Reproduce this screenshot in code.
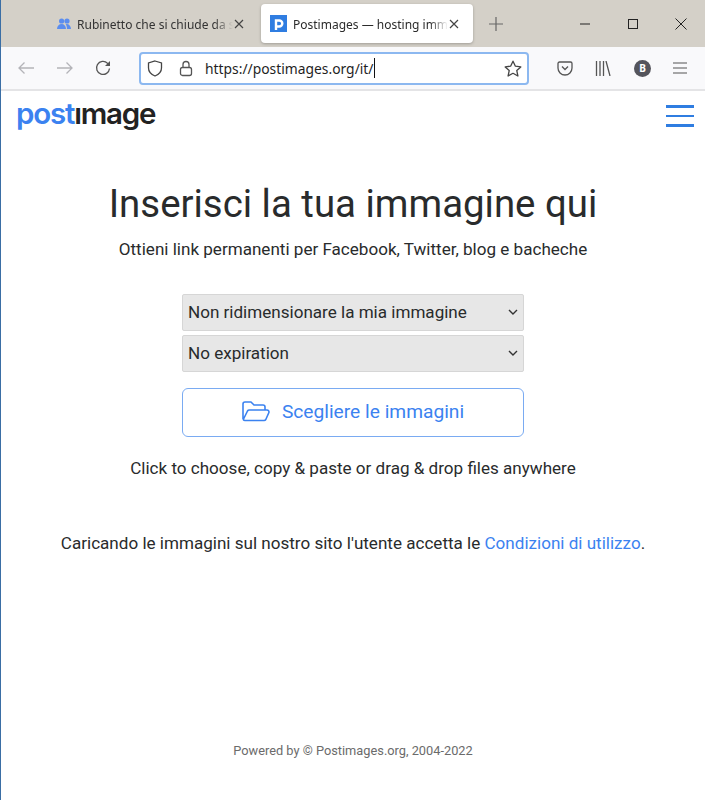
<script>
  const options1 = ['Non ridimensionare la mia immagine'];
  const options2 = ['No expiration'];
</script>

<div class="window">
  <div class="tabbar">
    <div class="tab inactive">
      <svg class="fav" width="14" height="14" viewBox="0 0 14 14"><circle cx="4.6" cy="4" r="2.6" fill="#5b8def"/><circle cx="10" cy="4" r="2.6" fill="#5b8def"/><path d="M0 12c0-3 2-5 4.6-5S9 9 9 12z" fill="#5b8def"/><path d="M9.6 7c2.4 0 4.4 2 4.4 5h-4c0-2-.4-3.500-1.400-4.500z" fill="#5b8def"/></svg>
      <span class="tabtext">Rubinetto che si chiude da solo</span>
      <svg class="x" width="12" height="12" viewBox="0 0 12 12"><path d="M2 2l8 8M10 2l-8 8" stroke="#444" stroke-width="1.200" fill="none"/></svg>
    </div>
    <div class="tab active">
      <svg class="fav2" width="17" height="17" viewBox="0 0 17 17"><rect width="17" height="17" fill="#2f7de1"/><path d="M6 15V5.500h3.300a3 3 0 0 1 0 6H6" stroke="#fff" stroke-width="2.400" fill="none"/></svg>
      <span class="tabtext">Postimages — hosting immagini</span>
      <svg class="x" width="12" height="12" viewBox="0 0 12 12"><path d="M2 2l8 8M10 2l-8 8" stroke="#444" stroke-width="1.200" fill="none"/></svg>
    </div>
    <svg class="plus" width="14" height="14" viewBox="0 0 14 14"><path d="M7 0v14M0 7h14" stroke="#666" stroke-width="1.200"/></svg>
    <div class="winbtns">
      <svg width="12" height="12" viewBox="0 0 12 12"><path d="M1 6h10" stroke="#222" stroke-width="1"/></svg>
      <svg width="12" height="12" viewBox="0 0 12 12"><rect x="1.500" y="1.500" width="9" height="9" fill="none" stroke="#222" stroke-width="1"/></svg>
      <svg width="12" height="12" viewBox="0 0 12 12"><path d="M.5 .5l11 11M11.500 .5l-11 11" stroke="#222" stroke-width="1"/></svg>
    </div>
  </div>

  <div class="toolbar">
    <svg class="nav first" width="18" height="14" viewBox="0 0 18 14"><path d="M17 7H2M7.500 1.500 2 7l5.500 5.500" stroke="#b4b4b8" stroke-width="1.300" fill="none"/></svg>
    <svg class="nav second" width="18" height="14" viewBox="0 0 18 14"><path d="M1 7h15M10.500 1.500 16 7l-5.500 5.500" stroke="#b4b4b8" stroke-width="1.300" fill="none"/></svg>
    <svg class="nav third" width="16" height="16" viewBox="0 0 16 16"><path d="M14.500 8.500A6.500 6.500 0 1 1 12.500 3.200L14.500 5" stroke="#555" stroke-width="1.300" fill="none"/><path d="M15 1v5h-5z" fill="#555"/></svg>
    <div class="urlbar">
      <svg class="shield" width="16" height="17" viewBox="0 0 16 17"><path d="M8 1l6.500 2v5c0 4-3 6.500-6.500 8C4.500 14.500 1.500 12 1.500 8V3z" fill="none" stroke="#444" stroke-width="1.300"/></svg>
      <svg class="lock" width="14" height="17" viewBox="0 0 14 17"><rect x="1.500" y="7.500" width="11" height="8" rx="2" fill="none" stroke="#555" stroke-width="1.300"/><path d="M4 7.500V4.500a3 3 0 0 1 6 0v3" fill="none" stroke="#555" stroke-width="1.300"/></svg>
      <span class="url">https://postimages.org/it/</span><span class="caret"></span>
      <svg class="star" width="18" height="17" viewBox="0 0 18 17"><path d="M9 1.200l2.400 5 5.400.7-4 3.700 1.100 5.400L9 13.300 4.100 16l1.100-5.400-4-3.700 5.400-.7z" fill="none" stroke="#444" stroke-width="1.300" stroke-linejoin="round"/></svg>
    </div>
    <svg class="tool pocket" width="16" height="15" viewBox="0 0 16 15"><path d="M2.500 1h11A1.500 1.500 0 0 1 15 2.500V7a7 7 0 0 1-14 0V2.500A1.500 1.500 0 0 1 2.500 1z" fill="none" stroke="#555" stroke-width="1.300"/><path d="M5 5.500l3 3 3-3" fill="none" stroke="#555" stroke-width="1.300"/></svg>
    <svg class="tool library" width="16" height="15" viewBox="0 0 16 15"><path d="M1.500 0v15M5 0v15M8.500 0v15M11 0l4 15" stroke="#555" stroke-width="1.300" fill="none"/></svg>
    <div class="avatar">B</div>
    <svg class="tool menu" width="14" height="12" viewBox="0 0 14 12"><path d="M0 1h14M0 6h14M0 11h14" stroke="#555" stroke-width="1.200"/></svg>
  </div>

  <div class="page">
    <header class="head">
      <div class="logo"><span class="post">post</span><span class="image">ımage</span></div>
      <div class="burger"><i></i><i></i><i></i></div>
    </header>

    <main class="main">
      <h1>Inserisci la tua immagine qui</h1>
      <p class="sub">Ottieni link permanenti per Facebook, Twitter, blog e bacheche</p>
      <div class="controls">
        <div class="select"><span>{options1[0]}</span><svg width="10" height="6" viewBox="0 0 10 6"><path d="M1 1l4 4 4-4" fill="none" stroke="#333" stroke-width="1.400"/></svg></div>
        <div class="select"><span>{options2[0]}</span><svg width="10" height="6" viewBox="0 0 10 6"><path d="M1 1l4 4 4-4" fill="none" stroke="#333" stroke-width="1.400"/></svg></div>
        <button class="choose">
          <svg width="28" height="21" viewBox="0 0 28 21"><path d="M1 18V3a2 2 0 0 1 2-2h6l3 3h9a2 2 0 0 1 2 2v2.500M1.300 18.500 5.500 10a2 2 0 0 1 1.800-1H25a2 2 0 0 1 1.800 2.800l-3 6.700a2 2 0 0 1-1.800 1H3a2 2 0 0 1-1.700-1z" fill="none" stroke="#3b82f0" stroke-width="1.600" stroke-linejoin="round"/></svg>
          <span>Scegliere le immagini</span>
        </button>
      </div>
      <p class="hint">Click to choose, copy &amp; paste or drag &amp; drop files anywhere</p>
      <p class="terms">Caricando le immagini sul nostro sito l'utente accetta le <a href="#top">Condizioni di utilizzo</a>.</p>
    </main>

    <footer class="foot">Powered by © Postimages.org, 2004-2022</footer>
  </div>
</div>

<style>
  :global(body) { margin: 0; background: #fff; }
  .window {
    width: 705px; height: 800px; box-sizing: border-box;
    border-left: 1px solid #3a6ea5;
    display: flex; flex-direction: column; overflow: hidden;
    font-family: Roboto, "Liberation Sans", sans-serif; color: #292b2c;
  }
  .tabbar {
    height: 47px; flex: none; background: #d4d0c8;
    display: flex; align-items: center; padding-left: 56px; box-sizing: border-box;
    font-family: "Noto Sans", Roboto, sans-serif; font-size: 12px; color: #2b2b2b;
  }
  .tab { height: 39px; display: flex; align-items: center; box-sizing: border-box; }
  .tab.inactive { width: 204px; }
  .tab.active {
    width: 212px; background: #fff; border-radius: 4px; padding-left: 9px;
    box-shadow: 0 1px 3px rgba(0,0,0,.25);
  }
  .fav { flex: none; margin-right: 6px; }
  .fav2 { flex: none; margin-right: 6px; }
  .tabtext {
    font-family: "Noto Sans", sans-serif; white-space: nowrap; overflow: hidden; flex: 1; min-width: 0; padding-top: 2px;
    -webkit-mask-image: linear-gradient(to right, #000 88%, transparent);
    mask-image: linear-gradient(to right, #000 88%, transparent);
  }
  .inactive .tabtext { color: #333; }
  .x { flex: none; }
  .inactive .x { margin-right: 16px; }
  .active .x { margin-right: 13px; }
  .plus { margin-left: 16px; flex: none; }
  .winbtns { margin-left: auto; display: flex; gap: 36px; padding-right: 18px; }
  .toolbar {
    height: 44px; flex: none; background: #f9f9fb; border-bottom: 2px solid #e4e4e6;
    display: flex; align-items: center; box-sizing: border-box; padding-left: 16px;
  }
  .nav, .tool { flex: none; }
  .nav.second { margin-left: 21px; }
  .nav.third { margin-left: 21px; }
  .urlbar {
    margin-left: 28px; width: 390px; height: 33px; box-sizing: border-box; flex: none;
    background: #fff; border: 2px solid #8cb8f0; border-radius: 4px;
    display: flex; align-items: center; padding: 0 5px 0 6px;
  }
  .lock { margin-left: 16px; }
  .url { margin-left: 12px; font-family: "Noto Sans", sans-serif; font-size: 13.850px; color: #1f1f1f; }
  .caret { width: 1px; height: 20px; background: #111; }
  .star { margin-left: auto; }
  .pocket { margin-left: 28px; }
  .library { margin-left: 22px; }
  .avatar {
    margin-left: 23px; width: 17px; height: 17px; border-radius: 50%; background: #54545c; color: #fff;
    font: bold 10px "Noto Sans", sans-serif; display: flex; align-items: center; justify-content: center; flex: none;
  }
  .menu { margin-left: 22px; }
  .page { flex: 1; display: flex; flex-direction: column; min-height: 0; background: #fff; }
  .head { height: 50px; flex: none; display: flex; justify-content: space-between; align-items: center; padding: 0 11px 0 15px; box-sizing: border-box; }
  .logo { font: 600 29.500px/1 Inter, sans-serif; letter-spacing: -1.200px; margin-top: -5px; }
  .post { color: #3b82f0; }
  .image { color: #222; }
  .burger { display: flex; flex-direction: column; gap: 7px; }
  .burger i { display: block; width: 28px; height: 2.500px; background: #2f7de1; }
  .main { display: flex; flex-direction: column; align-items: center; }
  h1 { margin: 40px 0 0; font-size: 38.400px; font-weight: 400; line-height: 46px; white-space: nowrap; }
  .sub { margin: 10px 0 0; font-size: 17.070px; line-height: 24px; }
  .controls { margin-top: 33px; width: 342px; display: flex; flex-direction: column; }
  .select {
    height: 37px; box-sizing: border-box; background: #e7e7e7; border: 1px solid #d6d6d6; border-radius: 2px;
    display: flex; align-items: center; justify-content: space-between; padding: 0 5px 2px; font-size: 17.070px;
  }
  .select + .select { margin-top: 4px; }
  .choose {
    margin-top: 16px; height: 49px; background: #fff; border: 1px solid #7aabf2; border-radius: 6px;
    color: #3b82f0; font: 400 19.200px Roboto, sans-serif;
    display: flex; align-items: center; justify-content: center; gap: 12px; padding: 0 0 3px;
  }
  .hint { margin: 19px 0 0; font-size: 17.070px; line-height: 24px; }
  .terms { margin: 51px 0 0; font-size: 17.070px; line-height: 24px; }
  .terms a { color: #3b82f0; text-decoration: none; }
  .foot { margin-top: auto; padding-bottom: 40px; text-align: center; font-size: 12.800px; line-height: 18px; color: #6b6b6b; }
</style>
